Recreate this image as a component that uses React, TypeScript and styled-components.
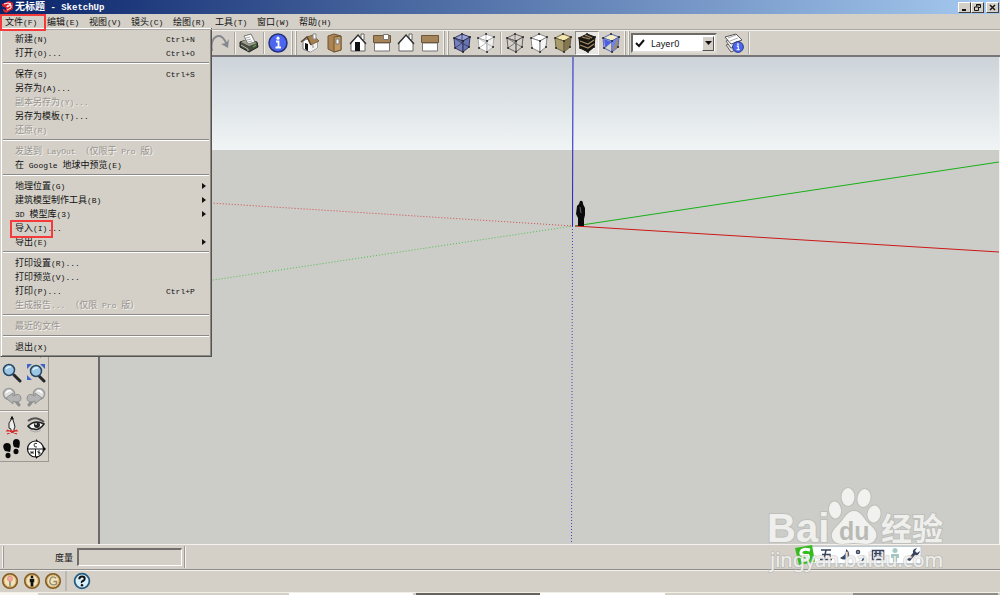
import React from "react";
import styled, { createGlobalStyle, css } from "styled-components";

const face = "#d4d0c8";
const light = "#f4f2ee";
const shade = "#8c8a86";
const red = "#f43a3a";

const GlobalStyle = createGlobalStyle`
  *, *::before, *::after { box-sizing: border-box; }
  html, body { margin: 0; padding: 0; }
  body {
    background: ${face};
    color: #111;
    font-family: "Noto Sans CJK SC", sans-serif;
    font-size: 9px;
    overflow: hidden;
  }
  button { font: inherit; color: inherit; background: none; border: 0; padding: 0; }
  svg { display: block; }
`;

/* ---------- text with fixed-pitch Latin beside Chinese ---------- */

const Latin = styled.span<{ $size: number }>`
  font-family: "Liberation Mono", monospace;
  font-size: ${(p) => p.$size}px;
  white-space: pre;
`;

const Mixed = ({ text, size = 8 }: { text: string; size?: number }) => (
  <span>
    {text.split(/([\x20-\x7e]+)/).map((part, i) =>
      i % 2 ? <Latin key={i} $size={size}>{part}</Latin> : part
    )}
  </span>
);

/* ---------- window frame ---------- */

const Window = styled.div`
  display: flex;
  flex-direction: column;
  min-height: 100vh;
  position: relative;
`;

const TitleBar = styled.header`
  display: flex;
  align-items: center;
  height: 14px;
  padding: 0 1px 0 2px;
  gap: 2px;
  background: linear-gradient(90deg, #0a246a, #a6caf0);
`;

const Title = styled.h1`
  flex: 1;
  margin: 0;
  color: #fff;
  font-size: 10px;
  line-height: 14px;
  font-weight: 700;
`;

const WindowButtons = styled.div`
  display: flex;
`;

const WindowButton = styled.button<{ $apart?: boolean }>`
  display: grid;
  place-items: center;
  width: 13px;
  height: 11px;
  margin-left: ${(p) => (p.$apart ? 2 : 0)}px;
  background: ${face};
  border: 1px solid;
  border-color: #fff #404040 #404040 #fff;
`;

const MenuBar = styled.nav`
  display: flex;
  height: 16px;
  border-bottom: 1px solid #aaa8a2;
  position: relative;
  z-index: 3;
`;

const marker = css`
  &::after {
    content: "";
    position: absolute;
    border: 2px solid ${red};
    pointer-events: none;
    z-index: 4;
  }
`;

const MenuTitle = styled.button<{ $marked?: boolean }>`
  position: relative;
  width: 42px;
  padding-left: 5px;
  text-align: left;
  line-height: 15px;
  white-space: nowrap;
  ${(p) => p.$marked && marker}
  &::after { inset: 0 -4px -2px 0; }
`;

/* ---------- drop-down file menu ---------- */

const DropDown = styled.div`
  position: absolute;
  z-index: 2;
  top: 28px;
  left: 0;
  width: 212px;
  padding: 4px 3px 2px;
  background: ${face};
  border: 1px solid;
  border-color: ${face} #55534f #55534f ${face};
  box-shadow: inset 1px 1px #fff, inset -1px -1px ${shade};
  border-top: 0;
`;

const MenuRow = styled.button<{ $marked?: boolean }>`
  position: relative;
  display: flex;
  width: 100%;
  height: 14px;
  line-height: 14px;
  padding: 0 2px 0 11px;
  text-align: left;
  white-space: nowrap;
  &:disabled { color: #96938e; text-shadow: 1px 1px #f6f4f0; }
  ${(p) => p.$marked && marker}
  &::after { left: 6px; top: -1px; width: 43px; height: 18px; }
`;

const RowLabel = styled.span`
  flex: 1;
`;

const Shortcut = styled.span`
  width: 40px;
`;

const SubArrow = styled.span`
  align-self: center;
  border: 3px solid transparent;
  border-left: 4px solid #111;
  border-right: 0;
`;

const MenuRule = styled.hr`
  height: 2px;
  margin: 2px -1px 3px;
  border: 0;
  border-top: 1px solid ${shade};
  border-bottom: 1px solid #fff;
`;

/* ---------- toolbar ---------- */

const ToolBar = styled.div`
  display: flex;
  align-items: center;
  height: 27px;
  padding-left: 208px;
  border-top: 1px solid ${light};
  border-bottom: 2px solid #77777a;
`;

const Tool = styled.button<{ $on?: boolean }>`
  display: grid;
  place-items: center;
  flex: none;
  width: 24px;
  height: 24px;
  ${(p) => p.$on && css`
    background: #e9e7e3;
    border: 1px solid;
    border-color: ${shade} #fff #fff ${shade};
  `}
`;

const Divider = styled.span`
  flex: none;
  width: 5px;
  height: 22px;
  padding-left: 2px;
  &::before {
    content: "";
    display: block;
    width: 2px;
    height: 100%;
    border-left: 1px solid #aaa7a1;
    border-right: 1px solid ${light};
  }
`;

const Grip = styled.span`
  flex: none;
  width: 8px;
  height: 24px;
  display: flex;
  gap: 2px;
  padding-left: 1px;
  &::before, &::after {
    content: "";
    width: 2px;
    background: ${light};
    border-right: 1px solid #a5a29c;
  }
`;

const LayerBox = styled.label`
  display: flex;
  align-items: center;
  width: 86px;
  height: 20px;
  margin-right: 5px;
  padding: 0 1px 0 2px;
  background: #fff;
  border: 2px solid;
  border-color: #6d6b67 #dedbd5 #dedbd5 #6d6b67;
`;

const LayerSelect = styled.select`
  appearance: none;
  flex: 1;
  min-width: 0;
  padding: 0 0 0 6px;
  border: 0;
  background: transparent;
  color: #111;
  font: 9px "Noto Sans", sans-serif;
`;

const DropArrow = styled.span`
  display: grid;
  place-items: center;
  width: 12px;
  height: 15px;
  background: ${face};
  border: 1px solid;
  border-color: #fff #55534f #55534f #fff;
`;

/* ---------- work area ---------- */

const Main = styled.main`
  display: flex;
  flex: 1;
  min-height: 0;
`;

const Side = styled.aside`
  flex: none;
  width: 100px;
  border-right: 2px solid #6a6a6c;
`;

const Palette = styled.div`
  display: grid;
  grid-template-columns: 24px 24px;
  width: 49px;
  padding-top: 280px;
  border-right: 1px solid #9b9994;
  border-bottom: 1px solid #9b9994;
`;

const PaletteRule = styled.hr`
  grid-column: 1 / 3;
  width: 100%;
  height: 2px;
  margin: 1px 0;
  border: 0;
  border-top: 1px solid #9b9994;
  border-bottom: 1px solid ${light};
`;

const Viewport = styled.section`
  flex: 1;
  min-width: 0;
  min-height: 487px;
  background: #cccdc8;
  border-right: 1px solid ${light};
  position: relative;
`;

const Scene = styled.svg`
  position: absolute;
  inset: 0;
  width: 100%;
  height: 100%;
`;

/* ---------- bottom bars ---------- */

const MeasureBar = styled.div`
  display: flex;
  align-items: center;
  height: 26px;
  padding-left: 2px;
  border-top: 1px solid ${light};
  border-bottom: 1px solid #8f8d89;
`;

const MeasureLabel = styled.label`
  display: flex;
  align-items: center;
  justify-content: flex-end;
  gap: 4px;
  width: 183px;
  height: 22px;
  padding-right: 2px;
  border-left: 1px solid ${light};
  border-right: 1px solid #9b9994;
  box-shadow: 1px 0 ${light}, inset 1px 0 #9b9994;
`;

const MeasureInput = styled.input`
  width: 105px;
  height: 18px;
  background: ${face};
  border: 2px solid;
  border-color: #716f6b #fff #fff #716f6b;
  border-right-width: 1px;
  border-bottom-width: 1px;
`;

const StatusBar = styled.footer`
  display: flex;
  align-items: center;
  height: 23px;
  padding-bottom: 1px;
  border-top: 1px solid ${light};
  border-bottom: 1px solid #f2f0e6;
`;

const StatusGroup = styled.div`
  display: flex;
  width: 67px;
  margin-right: 5px;
  border-right: 2px solid #bcb9b2;
`;

const StatusButton = styled.button`
  display: grid;
  place-items: center;
  width: 22px;
  height: 20px;
  padding-right: 2px;
`;

const TaskStrip = styled.div`
  display: grid;
  grid-template-columns: 38fr 251fr 124fr 3fr 124fr 125fr 188fr 145fr 2fr;
  height: 2px;
`;

const Task = styled.span<{ $tone?: string }>`
  background: ${(p) => p.$tone ?? face};
`;

/* ---------- overlays ---------- */

const ImeBar = styled.div`
  position: absolute;
  right: 78px;
  bottom: 29px;
  z-index: 1;
`;

const Watermark = styled.div`
  position: absolute;
  right: 49px;
  bottom: 20px;
  z-index: 2;
  pointer-events: none;
`;

/* ---------- icons ---------- */

const Icon = ({ size = 20, children }: { size?: number; children: React.ReactNode }) => (
  <svg width={size} height={size} viewBox="0 0 20 20" fill="none" stroke="#333" strokeWidth="1" aria-hidden="true">
    {children}
  </svg>
);

const AppLogo = () => (
  <svg width="11" height="12" viewBox="0 0 11 12" aria-hidden="true">
    <path d="M0 3 7 0l4 2v6l-7 4-3-2V8l3 1V7L0 5z" fill="#e3222b" />
    <path d="m2 3 4-1 3 1-4 2v1l4-2v3L5 9" fill="none" stroke="#fff" strokeWidth="1" />
  </svg>
);

const Redo = () => (
  <Icon><path d="M2 18C0 9 4 3 9 3c4 0 6 4 8 9" stroke="#85898f" strokeWidth="2" /><path d="m19 6-1 9-7-4 5-1z" fill="#85898f" stroke="none" /></Icon>
);

const Printer = () => (
  <Icon>
    <path d="m1 9 6-2 11 2 1 5-9 5-9-5z" fill="#474b40" stroke="#20221e" />
    <path d="m2 9 8 4 8-3-5-2-7-1z" fill="#9ea18d" stroke="none" />
    <path d="m5 3 7-2 4 8-7 2z" fill="#fff" stroke="#777" />
    <path d="m7 5 4-1M8 7l4-1M9 9l4-1" stroke="#aaa" />
    <path d="m2 12 7 4v2" stroke="#b7b9ad" /><path d="m14 14 3-2" stroke="#63c956" />
  </Icon>
);

const Info = ({ small = false }: { small?: boolean }) => (
  <g transform={small ? "translate(8 8) scale(.6)" : undefined}>
    <circle cx="10" cy="10" r="9" fill="#4c66f0" stroke="#25307c" strokeWidth="1.5" />
    <circle cx="10" cy="5.2" r="1.6" fill="#fff" stroke="none" />
    <path d="M8 8.500h2.500v6M7.500 14.500h5.500" stroke="#fff" strokeWidth="1.800" />
  </g>
);

const IsoHouse = () => (
  <Icon>
    <path d="M3 8v8l7 3 7-4V9l-4-6z" fill="#fff" stroke="#777" />
    <path d="m10 19 7-4V9l-7 3z" fill="#f2f2f2" stroke="none" />
    <path d="m7 4 6-2 6 6-8 4z" fill="#a6814f" stroke="#59452c" strokeWidth=".7" />
    <path d="m1 9 6-5 4 8" stroke="#59452c" strokeWidth="1.500" />
    <path d="M5 10v6l3 2v-7z" fill="#111" stroke="none" />
    <path d="M13 1h3v5h-3z" fill="#fff" stroke="#888" />
    <path d="M13 12v3" stroke="#888" />
  </Icon>
);

const TopHouse = () => (
  <Icon>
    <path d="M4 3 10 1l7 2v14l-7 2-6-3z" fill="#ab8451" stroke="#6c5435" />
    <path d="M10 4v15l7-2V3z" fill="#c19a66" stroke="#6c5435" />
    <path d="M12 6h3v5h-3z" fill="#fff" stroke="#777" />
  </Icon>
);

const FrontHouse = ({ door = false }: { door?: boolean }) => (
  <Icon>
    <path d="M13 1h3v6h-3z" fill="#fff" stroke="#666" />
    <path d="M3 9v9h14V9l-7-7z" fill="#fff" stroke="#666" />
    <path d="m2 11 8-9 8 9" stroke="#333" strokeWidth="1.4" />
    {door && <path d="M7 9h5v9H7z" fill="#111" stroke="none" />}
  </Icon>
);

const SideHouse = ({ chimney = false }: { chimney?: boolean }) => (
  <Icon>
    <path d="M2.5 10h15v8h-15z" fill="#fff" stroke="#777" />
    <path d="M1.500 2.500h17v7h-17z" fill="#a6845a" stroke="#6d563a" />
    {chimney && <path d="M11.500 1.500h5v5h-5z" fill="#fff" stroke="#777" />}
  </Icon>
);

type CubeProps = { top: string; left: string; right: string; wire?: boolean; kind?: "stripes" | "mono"; line?: string };

const Cube = ({ top, left, right, wire, kind, line = "#444" }: CubeProps) => (
  <Icon>
    <path d="m2 5 8-4 8 3-7 4z" fill={top} stroke={line} />
    <path d="m2 5 9 3v11l-8-4z" fill={left} stroke={line} />
    <path d="m18 4-7 4v11l6-5z" fill={right} stroke={line} />
    {wire && <path d="M10 1v9l-7 5m7-5 7 4M2 5l8 5" stroke={line} strokeWidth=".8" />}
    {kind === "stripes" && (
      <path d="m3 8 8 3 6-4M3 12l8 3 6-4M5 4l8 2M8 2l7 3" stroke="#a48d68" strokeWidth="1.200" />
    )}
    {kind === "mono" && (
      <>
        <path d="m3 6 8 3-7 6z" fill="#4b5fe0" stroke="none" />
        <path d="m17 5-6 4v9z" fill="#6f82ee" stroke="none" />
      </>
    )}
    <path d="M2 5h.1M10 1h.1M18 4h.1M11 8h.1M11 19h.1M3 15h.1M17 14h.1" stroke="#222" strokeWidth="1.800" strokeLinecap="round" />
  </Icon>
);

const Layers = () => (
  <Icon>
    <path d="m2 12 5 7 10-4-5-6z" fill="#ddd" stroke="#666" />
    <path d="m2 8 5 7 10-4-5-6z" fill="#eee" stroke="#666" />
    <path d="m1 4 6 7 11-4-6-6z" fill="#fff" stroke="#555" />
    <path d="m4 5 8-3M6 8l8-3" stroke="#aaa" />
    <Info small />
  </Icon>
);

const Magnifier = ({ extents = false }: { extents?: boolean }) => (
  <Icon>
    {extents && <path d="M1 1h5L1 6zM19 1h-5l5 5zM1 17v-5l5 5z" fill="#3b64c8" stroke="none" />}
    <path d="m12 12 6 6" stroke="#25282b" strokeWidth="3" strokeLinecap="round" />
    <circle cx={extents ? 10 : 7} cy={extents ? 8 : 7} r="5.500" fill="#9cc6e6" stroke="#274762" strokeWidth="1.500" />
    <path d={extents ? "M7 7q2-3 5-2" : "M4 6q2-3 5-2"} stroke="#e8f5ff" strokeWidth="1.500" />
  </Icon>
);

const PrevNext = ({ flip = false }: { flip?: boolean }) => (
  <Icon>
    <g transform={flip ? "translate(20 0) scale(-1 1)" : undefined}>
      <path d="m12 12 5 6" stroke="#8e8e8e" strokeWidth="3" strokeLinecap="round" />
      <circle cx="7" cy="7" r="5.500" fill="#dedede" stroke="#999" strokeWidth="1.500" />
      <path d="m4 11 7-5v3q7-4 8 2 0 4-5 4l-3-1v3z" fill="#b4b4b4" stroke="#8f8f8f" />
      <path d="M4 6q2-3 5-2" stroke="#fff" strokeWidth="1.500" />
    </g>
  </Icon>
);

const PlaceCamera = () => (
  <Icon>
    <path d="M10 2q-2 1-1 3l-2 3v5l2 1v3h3v-3l1-2-1-4-1-3q1-2-1-3z" fill="#eee" stroke="#222" />
    <path d="M10 1.500v3" stroke="#111" strokeWidth="2" />
    <path d="m5 19 10-4M5 15l10 4M4 16h12" stroke="#e32222" strokeWidth="1.200" />
  </Icon>
);

const Eye = () => (
  <Icon>
    <path d="M2 6Q9 0 18 7" stroke="#555" strokeWidth="2" />
    <path d="M2 11Q9 4 18 9q-5 7-10 5-4 0-6-3z" fill="#f5f5f3" stroke="#222" strokeWidth="1.500" />
    <circle cx="11" cy="10" r="3" fill="#222" stroke="none" />
    <circle cx="10" cy="9" r="1" fill="#ddd" stroke="none" />
    <path d="M4 15q6 4 11 0" stroke="#aaa" />
  </Icon>
);

const Feet = () => (
  <Icon>
    <g fill="#080808" stroke="none">
      <path d="M5 4c5 0 4 5 3 9l-5-1C0 8 1 4 5 4z" /><ellipse cx="6" cy="16.500" rx="2.500" ry="2.800" />
      <path d="M14 0c5 0 4 5 3 9l-5-1c-2-4-1-8 2-8z" /><ellipse cx="14" cy="12.500" rx="2.500" ry="2.800" />
    </g>
  </Icon>
);

const SectionMark = () => (
  <Icon>
    <path d="m10 0 10 10-10 10z" fill="#080808" stroke="none" />
    <circle cx="9.500" cy="10" r="8" fill="#fff" stroke="#111" strokeWidth="1.200" />
    <path d="M1 10h17M9.500 10v8" stroke="#111" />
    <path d="M11 4.500Q8 3.500 8 6t3 2M5 12v3m0-1.500h2M7 12v3M14 12h-2v1.500h2V15h-2" stroke="#222" strokeWidth=".9" />
  </Icon>
);

const Orbit = () => (
  <Icon><path d="M4 13q5 8 12 0M10 6v12" stroke="#5575b9" strokeWidth="2" /></Icon>
);

const Hand = () => (
  <Icon><path d="m5 8 4 8 6 2 3-6" fill="#fff" stroke="#333" /></Icon>
);

const Coin = ({ kind }: { kind: "pin" | "man" | "g" }) => (
  <Icon size={18}>
    <circle cx="10" cy="10" r="8" fill="#f4e3b7" stroke="#875d22" strokeWidth="2" />
    <circle cx="10" cy="10" r="6.500" stroke="#d3b477" />
    {kind === "pin" && (
      <><path d="M10 10v6" stroke="#777" strokeWidth="1.500" /><circle cx="10" cy="7.500" r="2.800" fill="#f2a99e" stroke="#df8f84" /></>
    )}
    {kind === "man" && (
      <><circle cx="10" cy="5.500" r="1.500" fill="#111" stroke="none" /><path d="M7.500 7.500h5v4h-1V16h-3v-4.500h-1z" fill="#111" stroke="none" /></>
    )}
    {kind === "g" && <path d="M13.500 7Q9 3.500 7 8t2 6q3 1 5-1v-2.500h-3.500" stroke="#8e8870" strokeWidth="1.500" />}
  </Icon>
);

const Help = () => (
  <Icon size={18}>
    <circle cx="10" cy="10" r="8.200" fill="#d9effa" stroke="#265b80" strokeWidth="2" />
    <path d="M7 8q0-3 3-3t3 2.500Q13 9 11 10t-1 2" stroke="#111" strokeWidth="2.200" />
    <circle cx="10" cy="14.800" r="1.400" fill="#111" stroke="none" />
  </Icon>
);

/* ---------- data ---------- */

const menuTitles = ["文件(F)", "编辑(E)", "视图(V)", "镜头(C)", "绘图(R)", "工具(T)", "窗口(W)", "帮助(H)"];

type Row = { label: string; keys?: string; off?: boolean; sub?: boolean; marked?: boolean };

const menuGroups: Row[][] = [
  [{ label: "新建(N)", keys: "Ctrl+N" }, { label: "打开(O)...", keys: "Ctrl+O" }],
  [
    { label: "保存(S)", keys: "Ctrl+S" },
    { label: "另存为(A)..." },
    { label: "副本另存为(Y)...", off: true },
    { label: "另存为模板(T)..." },
    { label: "还原(R)", off: true },
  ],
  [{ label: "发送到 LayOut （仅限于 Pro 版）", off: true }, { label: "在 Google 地球中预览(E)" }],
  [
    { label: "地理位置(G)", sub: true },
    { label: "建筑模型制作工具(B)", sub: true },
    { label: "3D 模型库(3)", sub: true },
    { label: "导入(I)...", marked: true },
    { label: "导出(E)", sub: true },
  ],
  [
    { label: "打印设置(R)..." },
    { label: "打印预览(V)..." },
    { label: "打印(P)...", keys: "Ctrl+P" },
    { label: "生成报告... （仅限 Pro 版）", off: true },
  ],
  [{ label: "最近的文件", off: true }],
  [{ label: "退出(X)" }],
];

const paletteTop: [string, React.ReactNode][] = [
  ["环绕观察", <Orbit />],
  ["平移", <Hand />],
  ["缩放", <Magnifier />],
  ["缩放范围", <Magnifier extents />],
  ["上一个", <PrevNext />],
  ["下一个", <PrevNext flip />],
];

const paletteBottom: [string, React.ReactNode][] = [
  ["定位镜头", <PlaceCamera />],
  ["正面观察", <Eye />],
  ["漫游", <Feet />],
  ["剖面", <SectionMark />],
];

const viewTools: [string, React.ReactNode][] = [
  ["等轴", <IsoHouse />],
  ["俯视图", <TopHouse />],
  ["主视图", <FrontHouse door />],
  ["右视图", <SideHouse chimney />],
  ["后视图", <FrontHouse />],
  ["左视图", <SideHouse />],
];

const ToolList = ({ items }: { items: [string, React.ReactNode][] }) => (
  <>
    {items.map(([name, icon]) => (
      <Tool key={name} aria-label={name}>{icon}</Tool>
    ))}
  </>
);

const FileMenu = () => (
  <DropDown role="menu">
    {menuGroups.map((group, g) => (
      <React.Fragment key={g}>
        {g > 0 && <MenuRule />}
        {group.map((row) => (
          <MenuRow key={row.label} role="menuitem" disabled={row.off} $marked={row.marked}>
            <RowLabel><Mixed text={row.label} /></RowLabel>
            {row.keys && <Shortcut><Mixed text={row.keys} /></Shortcut>}
            {row.sub && <SubArrow />}
          </MenuRow>
        ))}
      </React.Fragment>
    ))}
  </DropDown>
);

const Model = () => (
  <Scene viewBox="0 0 899 487" preserveAspectRatio="xMidYMid slice" aria-hidden="true">
    <defs>
      <linearGradient id="sky" x1="0" y1="0" x2="0" y2="1">
        <stop offset="0" stopColor="#cdd4d9" />
        <stop offset="1" stopColor="#f0f4f5" />
      </linearGradient>
    </defs>
    <rect width="899" height="93" fill="url(#sky)" />
    <rect y="93" width="899" height="394" fill="#cccdc8" />
    <g fill="none" strokeWidth="1">
      <path d="M0 139 473 169" stroke="#d04848" strokeDasharray="1 2" />
      <path d="M0 240 473 169" stroke="#4cc04c" strokeDasharray="1 2" />
      <path d="m472.500 169-1 318" stroke="#4040c8" strokeDasharray="1 2" />
      <path d="M473 0 472.500 169" stroke="#2020c0" />
      <path d="m475 169 424-64" stroke="#18b018" />
      <path d="m475 169 424 26" stroke="#cc1818" />
    </g>
    <path d="M480 144q3-1 3 3l2 4v7l-1 4v7h-6v-8l-2-4 1-8 2-2z" fill="#0b0b0d" />
    <path d="m480 150 1 6" stroke="#666" strokeWidth="1" />
  </Scene>
);

const Ime = () => (
  <ImeBar>
    <svg width="128" height="22" viewBox="0 0 128 22" aria-label="五">
      <rect x="14" y="2.500" width="113" height="17" fill="#fdfeff" stroke="#bccbd6" />
      <path d="m1 4 17-3 3 17-16 3z" fill="#35bb1c" />
      <path d="M16 6Q8 4 7 8t7 3.500Q16 17 7 16" fill="none" stroke="#fff" strokeWidth="3" />
      <g fill="none" stroke="#39435c" strokeWidth="1.500">
        <path d="M27 6h10M28 10.500h8v5M32 6l-2 9.500M26 15.500h12" />
        <circle cx="64" cy="8" r="1.500" />
        <path d="m69 12 1 2-2 3M78.500 6.500h11v9h-11zM80 9.500h9M80 12.500h9M82 6v7M86 6v7" />
      </g>
      <path d="M52 5q1 6-6 9 6 4 9-2 1-4-3-7z" fill="#39435c" />
      <g fill="#a5c9c4"><circle cx="101" cy="6.500" r="2.500" /><path d="M97 10h8v4h-2v4h-4v-4h-2z" /></g>
      <path d="m113 16 6-7q-1-4 4-5l-2 3 2 2 3-2q-1 5-5 4l-5 6z" fill="#39435c" />
    </svg>
  </ImeBar>
);

const SiteMark = () => (
  <Watermark>
    <svg width="184" height="90" viewBox="0 0 184 90">
      <g fill="#f5f5f3" fillOpacity=".9" stroke="#a9aaa6" strokeOpacity=".4" strokeWidth="2" paintOrder="stroke">
        <text x="0" y="57" fontFamily="Liberation Sans, sans-serif" fontWeight="700" fontSize="40">Bai</text>
        <ellipse cx="68" cy="25" rx="6" ry="8.500" transform="rotate(-8 68 25)" />
        <ellipse cx="81" cy="12" rx="6.500" ry="9" />
        <ellipse cx="97" cy="13" rx="6.500" ry="9" transform="rotate(12 97 13)" />
        <ellipse cx="107" cy="29" rx="6.500" ry="8.500" transform="rotate(8 107 29)" />
        <path d="M87 26c7 0 9 7 15 13 7 6 10 11 5 17-5 5-12 2-20 2s-15 3-20-2c-5-6-1-11 5-17 6-6 8-13 15-13z" />
        <text x="114" y="55" fontFamily="Noto Sans CJK SC, sans-serif" fontWeight="700" fontSize="31">经验</text>
        <text x="3" y="82" fontFamily="Noto Sans, sans-serif" fontSize="20">jingyan.baidu.com</text>
      </g>
      <text x="72" y="55" fill="#b9bab6" fontFamily="Liberation Sans, sans-serif" fontWeight="700" fontSize="25">du</text>
    </svg>
  </Watermark>
);

export default function App() {
  return (
    <Window>
      <GlobalStyle />
      <TitleBar>
        <AppLogo />
        <Title><Mixed text="无标题 - SketchUp" size={9} /></Title>
        <WindowButtons>
          <WindowButton aria-label="最小化">
            <svg width="7" height="7"><path d="M1 6h4" stroke="#111" strokeWidth="2" /></svg>
          </WindowButton>
          <WindowButton aria-label="还原">
            <svg width="7" height="7" fill="none" stroke="#111"><path d="M2.500 2.500v-2h4v3h-2M.5 3h4v3.500h-4zM2 1h4" /></svg>
          </WindowButton>
          <WindowButton aria-label="关闭" $apart>
            <svg width="7" height="7"><path d="m1 1 5 5M6 1 1 6" stroke="#111" strokeWidth="1.400" /></svg>
          </WindowButton>
        </WindowButtons>
      </TitleBar>

      <MenuBar>
        {menuTitles.map((t, i) => (
          <MenuTitle key={t} $marked={i === 0}><Mixed text={t} /></MenuTitle>
        ))}
      </MenuBar>
      <FileMenu />

      <ToolBar>
        <Tool aria-label="重做"><Redo /></Tool>
        <Divider />
        <Tool aria-label="打印"><Printer /></Tool>
        <Divider />
        <Tool aria-label="模型信息"><Icon><Info /></Icon></Tool>
        <Grip />
        <ToolList items={viewTools} />
        <Grip />
        <Tool aria-label="X 射线"><Cube top="#9ca4d6" left="#7780ba" right="#6973ae" wire line="#30365e" /></Tool>
        <Tool aria-label="后边线"><Cube top="#fff" left="#fff" right="#eee" wire line="#aaa" /></Tool>
        <Divider />
        <Tool aria-label="线框"><Cube top="none" left="none" right="none" wire line="#666" /></Tool>
        <Tool aria-label="隐藏线"><Cube top="#fff" left="#fff" right="#f4f4f4" line="#888" /></Tool>
        <Tool aria-label="阴影"><Cube top="#f3e7ae" left="#a99b6c" right="#82774f" line="#6b6244" /></Tool>
        <Tool aria-label="材质贴图" $on><Cube top="#29221a" left="#17130f" right="#17130f" kind="stripes" line="#17130f" /></Tool>
        <Tool aria-label="单色"><Cube top="#f5eec4" left="#d9d6c6" right="#9c906b" kind="mono" line="#5363b8" /></Tool>
        <Grip />
        <LayerBox>
          <svg width="10" height="10" aria-hidden="true"><path d="m1 5 3 3 5-6" fill="none" stroke="#111" strokeWidth="2" /></svg>
          <LayerSelect aria-label="图层" defaultValue="Layer0">
            <option>Layer0</option>
          </LayerSelect>
          <DropArrow><svg width="7" height="4"><path d="M0 0h7L3.500 4z" fill="#111" /></svg></DropArrow>
        </LayerBox>
        <Tool aria-label="图层管理"><Layers /></Tool>
        <Divider />
      </ToolBar>

      <Main>
        <Side>
          <Palette>
            <ToolList items={paletteTop} />
            <PaletteRule />
            <ToolList items={paletteBottom} />
          </Palette>
        </Side>
        <Viewport>
          <Model />
        </Viewport>
      </Main>

      <MeasureBar>
        <MeasureLabel>
          度量
          <MeasureInput type="text" />
        </MeasureLabel>
      </MeasureBar>

      <StatusBar>
        <StatusGroup>
          <StatusButton aria-label="地理位置"><Coin kind="pin" /></StatusButton>
          <StatusButton aria-label="作者"><Coin kind="man" /></StatusButton>
          <StatusButton aria-label="登录"><Coin kind="g" /></StatusButton>
        </StatusGroup>
        <StatusButton aria-label="帮助"><Help /></StatusButton>
      </StatusBar>

      <TaskStrip>
        <Task $tone="#f8f7f4" /><Task /><Task $tone="#fff" /><Task /><Task $tone="#66645f" />
        <Task $tone="#fff" /><Task /><Task $tone="#8f8d89" /><Task />
      </TaskStrip>

      <Ime />
      <SiteMark />
    </Window>
  );
}
